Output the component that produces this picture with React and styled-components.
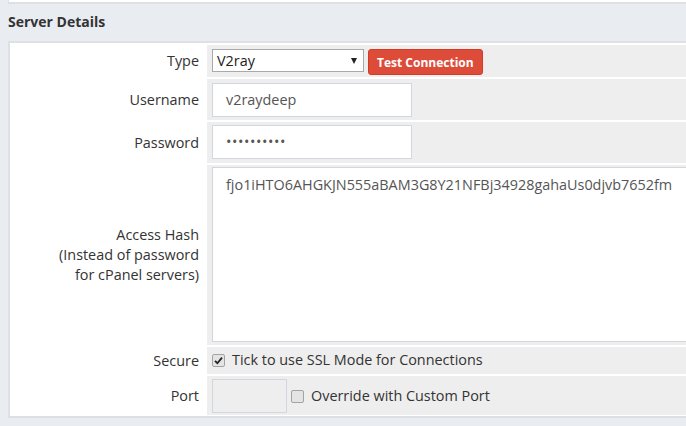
import React from 'react';
import styled, { createGlobalStyle } from 'styled-components';

const GlobalStyle = createGlobalStyle`
  html, body {
    margin: 0;
    padding: 0;
    background: #e9edf1;
    overflow: hidden;
  }
  body {
    font-family: 'Open Sans', 'Noto Sans', sans-serif;
    font-size: 14.4px;
    color: #333;
  }
`;

const Page = styled.div`
  width: 686px;
  height: 426px;
  overflow: hidden;
`;

const PrevPanel = styled.div`
  margin-left: 8px;
  width: 740px;
  height: 2px;
  background: #fff;
  border: 1px solid #dde1e6;
  border-top: none;
  border-bottom-width: 2px;
`;

const Heading = styled.h3`
  margin: 0;
  padding: 8px 8px 0;
  height: 29px;
  font-size: 14px;
  font-weight: 700;
  color: #333;
`;

const Panel = styled.div`
  margin-left: 8px;
  width: 740px;
  background: #fff;
  border: 1px solid #dde1e6;
  border-width: 2px 1px 2px 2px;
  padding: 2px 0 1px 1px;
`;

const Grid = styled.div`
  display: grid;
  grid-template-columns: 194px 1fr;
  column-gap: 2px;
  row-gap: 2px;
`;

const Label = styled.div`
  display: flex;
  align-items: center;
  justify-content: flex-end;
  text-align: right;
  padding-right: 6px;
  line-height: 20px;
`;

const Field = styled.div`
  background: #eeeeee;
  display: flex;
  align-items: ${p => (p.$top ? 'flex-start' : 'center')};
  gap: 4px;
  padding: ${p => p.$pad || '3px 5px'};
`;

const Select = styled.div`
  position: relative;
  box-sizing: border-box;
  width: 152px;
  height: 23px;
  background: #fff;
  border: 1px solid #a9a9a9;
  padding: 0 4px;
  line-height: 21px;
  color: #222;
  &:after {
    content: '';
    position: absolute;
    right: 6px;
    top: 8px;
    border: 3.5px solid transparent;
    border-top: 6px solid #222;
    border-bottom: none;
  }
`;

const Button = styled.button`
  box-sizing: border-box;
  height: 26px;
  padding: 0 8px;
  background: #dd4b39;
  border: 1px solid #d73925;
  border-radius: 3px;
  color: #fff;
  font-family: inherit;
  font-size: 12px;
  font-weight: 700;
`;

const Input = styled.div`
  box-sizing: border-box;
  width: ${p => p.$w || '200px'};
  height: ${p => p.$h || '34px'};
  padding: 6px 13px;
  background: ${p => (p.$disabled ? '#eee' : '#fff')};
  border: 1px solid #d2d6de;
  color: #555;
  line-height: 20px;
  letter-spacing: ${p => (p.$dots ? '0.6px' : 'normal')};
`;

const TextArea = styled(Input)`
  width: 520px;
  padding: 7px 13px;
  white-space: nowrap;
`;

const Check = styled.span`
  box-sizing: border-box;
  display: inline-flex;
  align-items: center;
  justify-content: center;
  width: 13px;
  height: 13px;
  margin-right: 3px;
  background: #e4e4e4;
  border: 1px solid #a3a3a3;
  border-radius: 2px;
  flex-shrink: 0;
`;

const CheckText = styled.span`
  line-height: 20px;
  color: #333;
`;

const CheckBox = ({ checked }) => (
  <Check>
    {checked && (
      <svg width="9" height="9" viewBox="0 0 9 9">
        <path d="M1 4.8 L3.4 7.2 L8 1.6" stroke="#222" strokeWidth="1.8" fill="none" />
      </svg>
    )}
  </Check>
);

export default function App() {
  return (
    <Page>
      <GlobalStyle />
      <PrevPanel />
      <Heading>Server Details</Heading>
      <Panel>
        <Grid>
          <Label>Type</Label>
          <Field $pad="4px 5px 2px" $top>
            <Select>V2ray</Select>
            <Button>Test Connection</Button>
          </Field>

          <Label>Username</Label>
          <Field $pad="4px 5px 3px">
            <Input>v2raydeep</Input>
          </Field>

          <Label>Password</Label>
          <Field $pad="3px 5px 4px">
            <Input $dots>••••••••••</Input>
          </Field>

          <Label>
            Access Hash
            <br />
            (Instead of password
            <br />
            for cPanel servers)
          </Label>
          <Field $pad="2px 5px 3px">
            <TextArea $h="175px">fjo1iHTO6AHGKJN555aBAM3G8Y21NFBj34928gahaUs0djvb7652fm</TextArea>
          </Field>

          <Label>Secure</Label>
          <Field $pad="3px 5px 4px">
            <CheckBox checked />
            <CheckText>Tick to use SSL Mode for Connections</CheckText>
          </Field>

          <Label>Port</Label>
          <Field $pad="3px 5px 2px">
            <Input $w="75px" $disabled />
            <CheckBox />
            <CheckText>Override with Custom Port</CheckText>
          </Field>
        </Grid>
      </Panel>
    </Page>
  );
}
